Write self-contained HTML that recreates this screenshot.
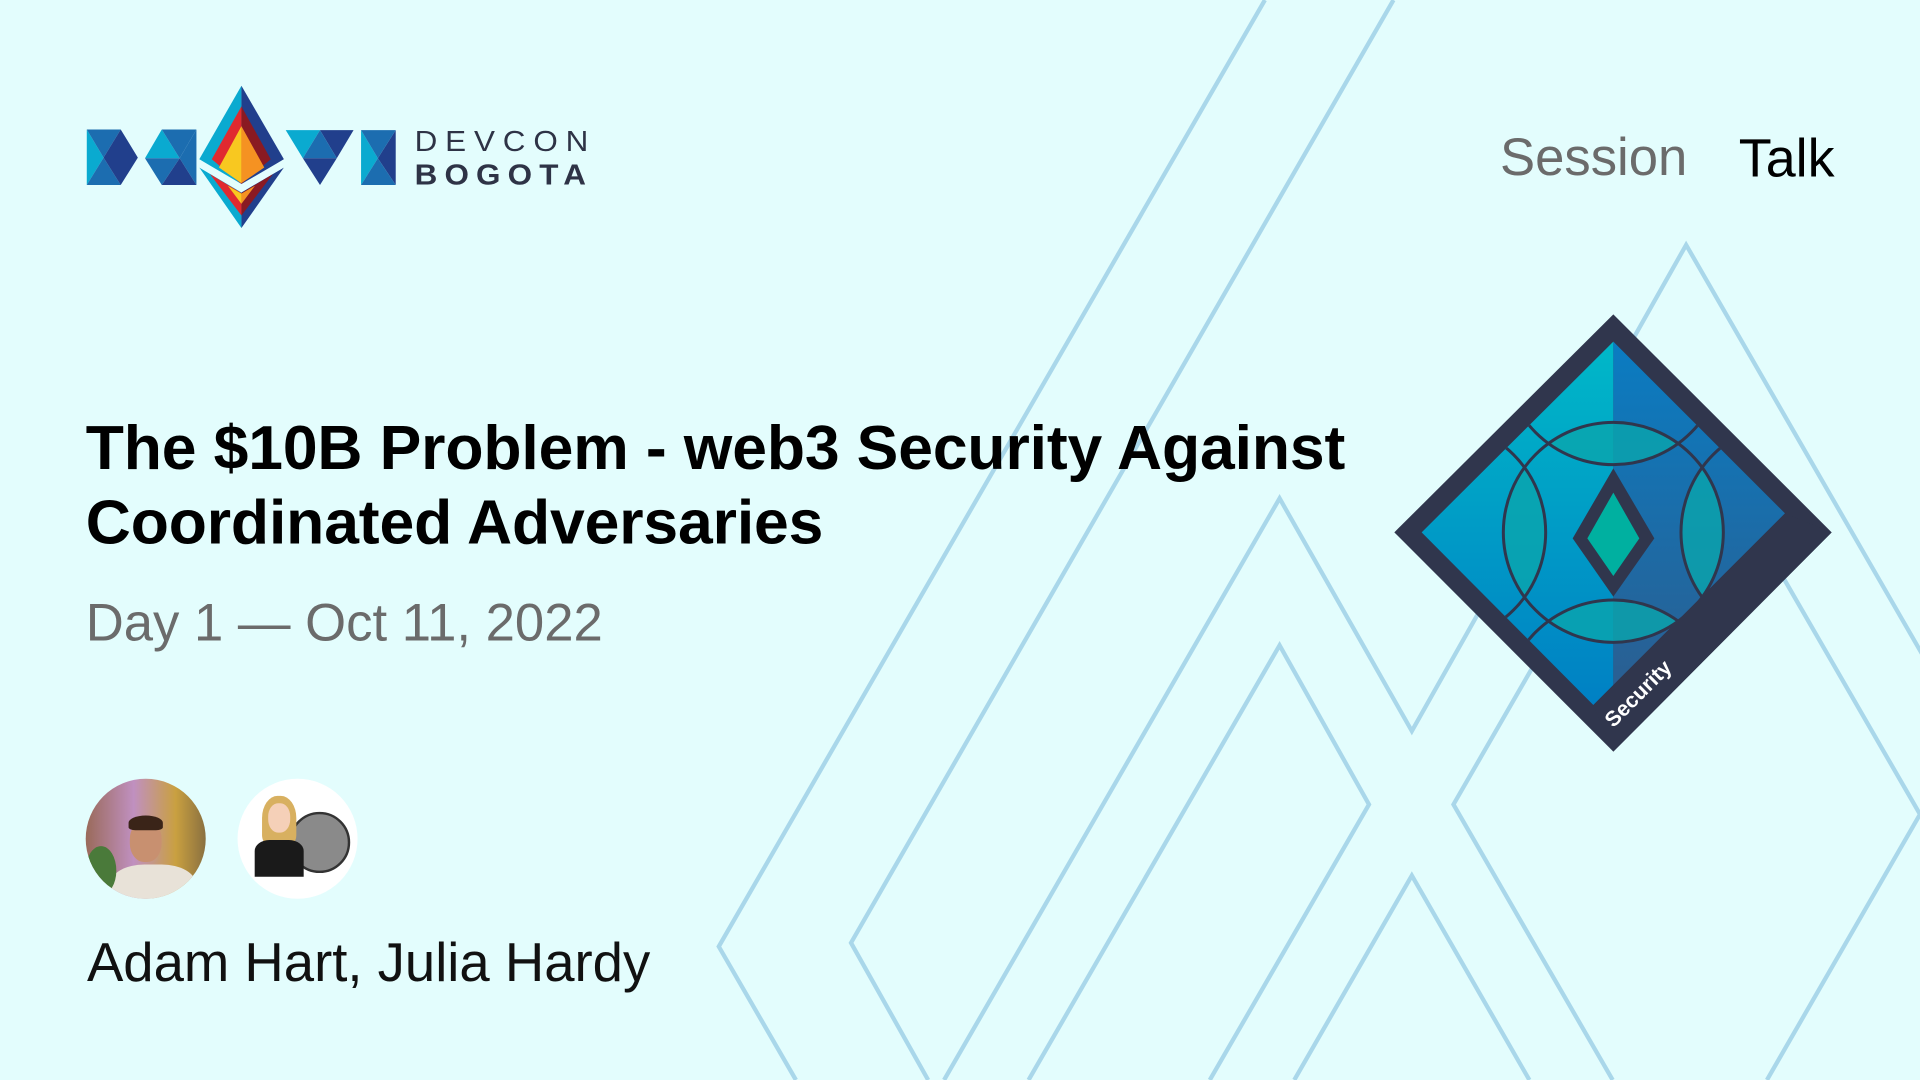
<!DOCTYPE html>
<html><head><meta charset="utf-8"><style>
html,body{margin:0;padding:0;width:1920px;height:1080px;overflow:hidden;background:#e3fdfd;}
#w{position:absolute;left:0;top:0;width:1568px;height:882px;transform:scale(1.22449);transform-origin:0 0;font-family:"Liberation Sans",sans-serif;}
.t{position:absolute;white-space:nowrap;}
</style></head><body>
<div id="w">
<svg style="position:absolute;left:0;top:0" width="1568" height="882" viewBox="0 0 1568 882">
<g fill="none" stroke="#a9d7ea" stroke-width="3.5" stroke-linejoin="miter">
<polyline points="1033,0 587,773 650,882"/>
<polyline points="1138,0 695,770 758,882"/>
<polyline points="771,882 1045,407 1153,597 1377,200 1700,760 1610,882"/>
<polyline points="840,882 1045,527 1118,657 988,882"/>
<polyline points="1057,882 1153,715 1249,882"/>
<polyline points="1317,882 1187,657 1375,331 1568,665 1443,882"/>
</g>
</svg>

<div class="t" style="left:1225px;top:105px;font-size:43px;color:#6b6b6b;">Session</div>
<div class="t" style="left:1420px;top:105px;font-size:44px;color:#000;">Talk</div>

<div class="t" style="left:70px;top:335px;font-size:51px;font-weight:bold;color:#000;line-height:61px;letter-spacing:-0.1px;">The $10B Problem - web3 Security Against<br>Coordinated Adversaries</div>
<div class="t" style="left:70px;top:485px;font-size:43px;color:#6b6b6b;">Day 1 — Oct 11, 2022</div>

<div style="position:absolute;left:70px;top:636px;width:98px;height:98px;border-radius:50%;overflow:hidden;background:linear-gradient(90deg,#9a6a5a 0%,#c090c0 40%,#c9a040 75%,#8a7040 100%);">
 <div style="position:absolute;left:20px;top:70px;width:70px;height:40px;border-radius:40% 40% 0 0;background:#e8e2d8;"></div>
 <div style="position:absolute;left:36px;top:34px;width:26px;height:34px;border-radius:45%;background:#c89070;"></div>
 <div style="position:absolute;left:35px;top:30px;width:28px;height:12px;border-radius:50% 50% 20% 20%;background:#3a2418;"></div>
 <div style="position:absolute;left:0;top:55px;width:25px;height:40px;background:#4a7a3a;border-radius:50%;"></div>
</div>
<div style="position:absolute;left:194px;top:636px;width:98px;height:98px;border-radius:50%;overflow:hidden;background:#fff;">
 <div style="position:absolute;left:42px;top:27px;width:50px;height:50px;border-radius:50%;background:#8a8a8a;border:2px solid #333;box-sizing:border-box;"></div>
 <div style="position:absolute;left:20px;top:14px;width:28px;height:40px;border-radius:45% 45% 20% 20%;background:#d8b060;"></div>
 <div style="position:absolute;left:25px;top:20px;width:18px;height:24px;border-radius:45%;background:#f5d0b8;"></div>
 <div style="position:absolute;left:14px;top:50px;width:40px;height:30px;background:#1a1a1a;border-radius:30% 30% 0 0;"></div>
</div>

<div class="t" style="left:71px;top:762px;font-size:44.5px;color:#111;">Adam Hart, Julia Hardy</div>
</div>

<svg style="position:absolute;left:60px;top:60px" width="560" height="176" viewBox="0 0 1568 532" preserveAspectRatio="none">
<g>
<polygon points="75,210 122,295 75,378" fill="#0aaad0"/>
<polygon points="75,210 170,210 122,295" fill="#1c6db0"/>
<polygon points="75,378 170,378 122,295" fill="#1c6db0"/>
<polygon points="122,295 170,210 218,295 170,378" fill="#213f8c"/>
<polygon points="238,297 285,210 335,297" fill="#0aaad0"/>
<polygon points="285,210 382,210 335,297" fill="#1c6db0"/>
<polygon points="382,210 382,378 335,297" fill="#1c6db0"/>
<polygon points="238,297 335,297 285,378" fill="#1c6db0"/>
<polygon points="335,297 382,378 285,378" fill="#213f8c"/>
<polygon points="632,212 728,212 680,297" fill="#0aaad0"/>
<polygon points="728,212 822,212 775,297" fill="#213f8c"/>
<polygon points="680,297 728,212 775,297" fill="#1c6db0"/>
<polygon points="680,297 775,297 728,378" fill="#213f8c"/>
<polygon points="843,212 890,297 843,378" fill="#0aaad0"/>
<polygon points="940,212 890,297 940,378" fill="#213f8c"/>
<polygon points="843,212 940,212 890,297" fill="#1c6db0"/>
<polygon points="843,378 940,378 890,297" fill="#1c6db0"/>
<polygon points="508,78 390,300 508,380" fill="#0aaad0"/>
<polygon points="508,78 627,300 508,380" fill="#213f8c"/>
<polygon points="508,140 425,300 508,375" fill="#e02a30"/>
<polygon points="508,140 590,300 508,375" fill="#8a1a22"/>
<polygon points="508,200 445,325 508,372" fill="#f8c820"/>
<polygon points="508,200 572,325 508,372" fill="#f59222"/>
<polygon points="390,325 508,400 508,508" fill="#0aaad0"/>
<polygon points="627,325 508,400 508,508" fill="#213f8c"/>
<polygon points="420,345 508,402 508,470" fill="#e02a30"/>
<polygon points="596,345 508,402 508,470" fill="#8a1a22"/>
<polygon points="470,380 508,404 508,435" fill="#f8c820"/>
<polygon points="546,380 508,404 508,435" fill="#f59222"/>
<polygon points="390,300 508,375 627,300 627,325 508,400 390,325" fill="#e3fdfd"/>
</g>
<text x="993" y="275" font-family="Liberation Sans,sans-serif" font-size="88" fill="#2e3346" letter-spacing="22">DEVCON</text>
<text x="993" y="376" font-family="Liberation Sans,sans-serif" font-size="88" font-weight="bold" fill="#2e3346" letter-spacing="20">BOGOTA</text>
</svg>

<svg style="position:absolute;left:1380px;top:300px" width="460" height="460" viewBox="0 0 1380 1380">
<defs>
<linearGradient id="gl" x1="0" y1="0" x2="0" y2="1"><stop offset="0" stop-color="#00b8c8"/><stop offset="1" stop-color="#0080c4"/></linearGradient>
<linearGradient id="gr" x1="0" y1="0" x2="0" y2="1"><stop offset="0" stop-color="#0a7cc2"/><stop offset="1" stop-color="#2a5f92"/></linearGradient>
<clipPath id="cd"><polygon points="700,125 1215,640 640,1215 125,697"/></clipPath>
</defs>
<polygon points="700,43 1355,697 700,1355 43,697" fill="#30364d"/>
<polygon points="700,125 125,697 640,1215 700,1155" fill="url(#gl)"/>
<polygon points="700,125 1215,640 700,1155" fill="url(#gr)"/>
<g clip-path="url(#cd)">
<g fill="#0aa5ad" fill-opacity="0.8">
<path d="M505,430 A330,330 0 0 1 895,430 A330,330 0 0 1 505,430 Z"/>
<path d="M505,964 A330,330 0 0 1 895,964 A330,330 0 0 1 505,964 Z"/>
<path d="M433,502 A330,330 0 0 1 433,892 A330,330 0 0 1 433,502 Z"/>
<path d="M967,502 A330,330 0 0 1 967,892 A330,330 0 0 1 967,502 Z"/>
</g>
<g fill="none" stroke="#30364d" stroke-width="9">
<circle cx="700" cy="697" r="330"/>
<circle cx="700" cy="164" r="330"/>
<circle cx="700" cy="1230" r="330"/>
<circle cx="167" cy="697" r="330"/>
<circle cx="1233" cy="697" r="330"/>
</g>
</g>
<polygon points="1215,640 1355,697 700,1355 640,1215" fill="#30364d"/>
<polygon points="700,505 823,715 700,890 578,715" fill="#30364d"/>
<polygon points="700,578 778,715 700,828 622,715" fill="#00b0a0"/>
<text x="0" y="0" transform="translate(700,1285) rotate(-45)" font-family="Liberation Sans,sans-serif" font-weight="bold" font-size="64" fill="#fff">Security</text>
</svg>
</body></html>
